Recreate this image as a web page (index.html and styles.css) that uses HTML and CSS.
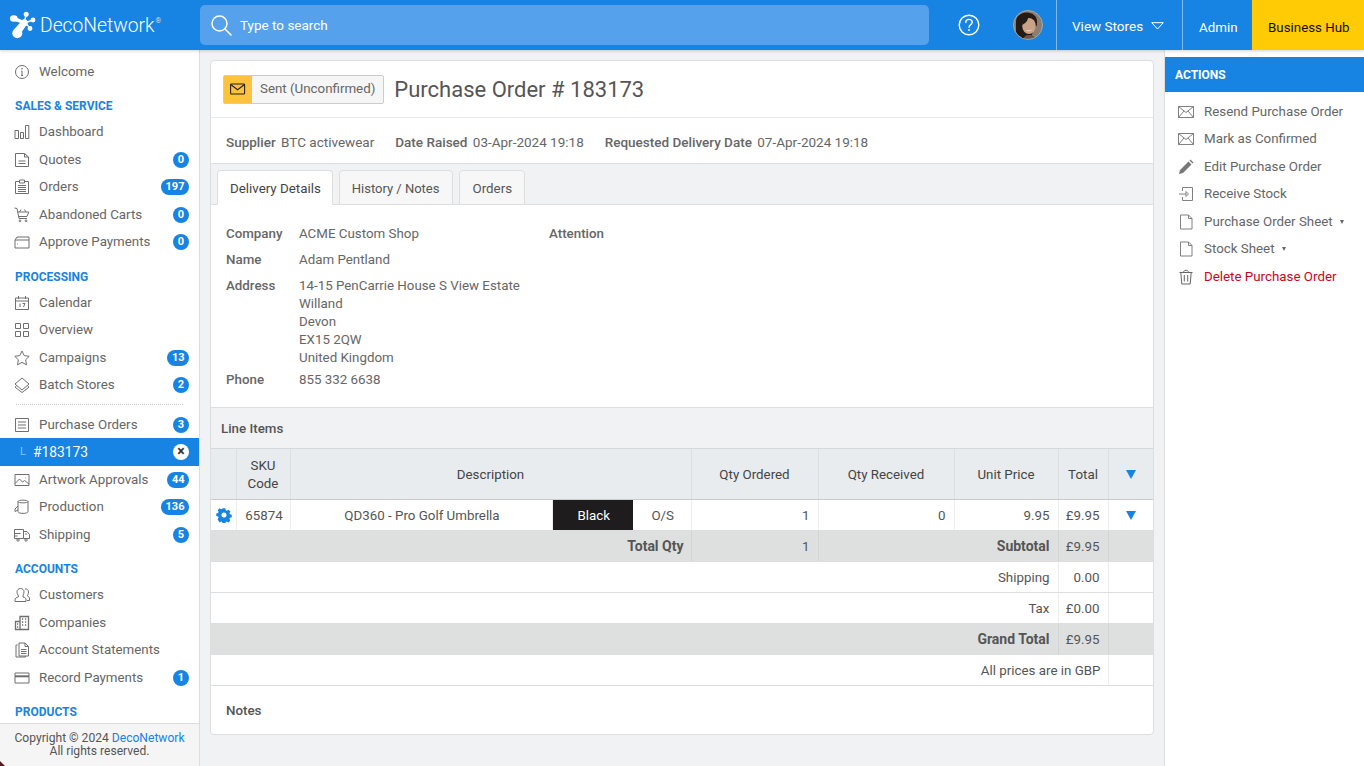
FILE: index.html
```html
<!DOCTYPE html>
<html lang="en">
<head>
<meta charset="utf-8">
<title>Purchase Order # 183173</title>
<link rel="stylesheet" href="styles.css">
</head>
<body>
<header class="topbar">
  <div class="brand">
    <svg class="logo" width="28" height="28" viewBox="0 0 28 28"><g fill="#fff"><ellipse cx="3.800" cy="6.500" rx="3.800" ry="3.300"/><circle cx="16.200" cy="2.200" r="2.500"/><circle cx="23" cy="8" r="2.400"/><circle cx="20" cy="16.500" r="2.400"/><circle cx="7.300" cy="21.200" r="5"/><circle cx="14.300" cy="10.800" r="3.500"/><path d="M4 4.500l9 4-1 3-9-3zM15.500 2.500l1.300.4-1.600 7-1.400-.4zM22.500 7.300l.5 1.400-8 3-.5-1.400zM14.800 11l1-.8 5 5.700-1 1zM3.500 18l8-9 5 4-6.500 9.500z"/></g></svg>
    <span class="brand-name">DecoNetwork<sup class="reg">®</sup></span>
  </div>
  <div class="search">
    <svg width="22" height="22" viewBox="0 0 22 22" fill="none" stroke="#fff" stroke-width="1.500"><circle cx="9.500" cy="9.500" r="7.500"/><path d="M15 15l6 6" stroke-linecap="round"/></svg>
    <span>Type to search</span>
  </div>
  <div class="help">
    <svg width="22" height="22" viewBox="0 0 22 22" fill="none" stroke="#fff" stroke-width="1.400"><circle cx="11" cy="11" r="9.800"/><path d="M7.800 8.600c0-2 1.400-3.200 3.200-3.200s3.200 1.200 3.200 2.900c0 2.300-3.200 2.500-3.200 5" stroke-linecap="round"/><circle cx="11" cy="16" r=".9" fill="#fff" stroke="none"/></svg>
  </div>
  <div class="avatar">
    <svg width="30" height="30" viewBox="0 0 30 30"><defs><clipPath id="av"><circle cx="15" cy="15" r="14.500"/></clipPath></defs><g clip-path="url(#av)"><rect width="30" height="30" fill="#8c7e70"/><path d="M3 30V12C3 5 9 2.500 14 2.500S24 6 24 11v4l-3 4-4 11z" fill="#241a16"/><ellipse cx="16" cy="16" rx="6.800" ry="8" fill="#c9a288"/><path d="M9 15c.5-5 3-7 6-7.500 0 3-2.500 6-6 7.500z" fill="#241a16"/><path d="M12.500 19.500c2 1.200 4.500 1.200 6.500 0-1 2.400-5.500 2.400-6.500 0z" fill="#efe2d8"/><path d="M10 30c1-4 3-5 6-5s6 1 7 5z" fill="#6a564a"/></g><circle cx="15" cy="15" r="14.500" fill="none" stroke="#a8a8a4"/></svg>
  </div>
  <a class="top-link stores">View Stores
    <svg width="13" height="8" viewBox="0 0 13 8" fill="none" stroke="#fff"><path d="M.7.700h11.600L6.500 7z"/></svg>
  </a>
  <a class="top-link admin">Admin</a>
  <a class="hub">Business Hub</a>
</header>

<div class="shell">
  <aside class="sidebar">
    <nav class="nav">
      <a class="row"><svg class="ico" viewBox="0 0 16 16"><circle cx="8" cy="8" r="6.500"/><path d="M8 7v4.500M7 11.500h2M7.200 7H8"/><circle cx="8" cy="4.800" r=".4"/></svg><span>Welcome</span></a>

      <h3 class="heading">SALES &amp; SERVICE</h3>
      <a class="row"><svg class="ico" viewBox="0 0 16 16"><path d="M1 6.500h3.500v8H1zM6.500 8.500h3v6h-3zM11.500 1.500h3.300v13h-3.300z"/></svg><span>Dashboard</span></a>
      <a class="row"><svg class="ico" viewBox="0 0 16 16"><path d="M1.500 1.500h9l4 3.500v9.500h-13zM10.500 1.500V5h4M4.500 9h7M4.500 11.500h7"/></svg><span>Quotes</span><b class="badge">0</b></a>
      <a class="row"><svg class="ico" viewBox="0 0 16 16"><path d="M5 2.500H1.500v12h13v-12H11M5.500 1h5v3h-5zM4 6.500h8M4 8.500h8M4 10.500h8M4 12.500h8"/></svg><span>Orders</span><b class="badge">197</b></a>
      <a class="row"><svg class="ico" viewBox="0 0 16 16"><path d="M.500 1l2.500.500 2 10h8M3.800 5h11l-1.800 4.500H5M5.500 5L7 2.500M12 5L10.500 2.500"/><circle cx="6" cy="13.800" r=".9"/><circle cx="12" cy="13.800" r=".9"/></svg><span>Abandoned Carts</span><b class="badge">0</b></a>
      <a class="row"><svg class="ico" viewBox="0 0 16 16"><path d="M1 6v8h14V3H3L1 6h14M3 10h.8"/></svg><span>Approve Payments</span><b class="badge">0</b></a>

      <h3 class="heading">PROCESSING</h3>
      <a class="row"><svg class="ico" viewBox="0 0 16 16"><path d="M1.500 3h13v11.500h-13zM1.500 6h13M4.500 1v3M11.500 1v3M6 8.500v3.500M8.500 8.500h2.500L9.500 12"/></svg><span>Calendar</span></a>
      <a class="row"><svg class="ico" viewBox="0 0 16 16"><path d="M1.500 1.500h5v5h-5zM9.500 1.500h5v5h-5zM1.500 9.500h5v5h-5zM9.500 9.500h5v5h-5z"/></svg><span>Overview</span></a>
      <a class="row"><svg class="ico" viewBox="0 0 16 16"><path d="M8 1l2.200 4.600 5 .7-3.600 3.500.9 5L8 12.400l-4.500 2.400.9-5L.8 6.300l5-.7z"/></svg><span>Campaigns</span><b class="badge">13</b></a>
      <a class="row"><svg class="ico" viewBox="0 0 16 16"><path d="M8 1l7 6-7 6-7-6zM2.500 9L1 10.200 8 15.500l7-5.300L13.500 9"/></svg><span>Batch Stores</span><b class="badge">2</b></a>
      <div class="rule"></div>
      <a class="row"><svg class="ico" viewBox="0 0 16 16"><path d="M1.500 1.500h13v13h-13zM4 5h8M4 8h8M4 11h8"/></svg><span>Purchase Orders</span><b class="badge">3</b></a>
      <a class="row current"><span class="tree">L</span><span>#183173</span><b class="close">×</b></a>
      <a class="row"><svg class="ico" viewBox="0 0 16 16"><path d="M1 2.500h14v11H1zM1 11.500l4.500-4.500 3 3 2-1.500 4.500 3.500M11 6h.6"/></svg><span>Artwork Approvals</span><b class="badge">44</b></a>
      <a class="row"><svg class="ico" viewBox="0 0 16 16"><path d="M4 2.500c0-1.800 10-1.800 10 0v10c0 2.500-10 2.500-10 0zM4 2.500c0 1.800 10 1.800 10 0M4 7L1 10v2.500L4 11"/></svg><span>Production</span><b class="badge">136</b></a>
      <a class="row"><svg class="ico" viewBox="0 0 16 16"><path d="M.5 2.500h9v9h-9zM9.500 4.500H13l2.500 3v4h-6M.5 6.500h6M.5 9h3M11 7h2"/><circle cx="4" cy="13" r="1.200"/><circle cx="12" cy="13" r="1.200"/></svg><span>Shipping</span><b class="badge">5</b></a>

      <h3 class="heading">ACCOUNTS</h3>
      <a class="row"><svg class="ico" viewBox="0 0 16 16"><path d="M9 10c2 .5 3 1 3 3v1.500H1V13c0-2 1.500-2.500 3.500-3.200.5-1-1.500-2-1.500-5C3 3 4.500 1.500 6.500 1.500S10 3 10 4.800c0 2.500-1.500 4-1 5.200zM11 2c2-.5 3.500 1 3.500 3 0 2-1 3-1 4 1 .5 2 1 2 3v1.500H13"/></svg><span>Customers</span></a>
      <a class="row"><svg class="ico" viewBox="0 0 16 16"><path d="M6 14.500V1.500h8.500v13zM1.500 14.500V6.500H6v8zM8 4h1.200M11 4h1.200M8 7h1.200M11 7h1.200M8 10h1.200M11 10h1.200M3 9h1.200M3 12h1.200" stroke-width="1.300"/></svg><span>Companies</span></a>
      <a class="row"><svg class="ico" viewBox="0 0 16 16"><path d="M5 1h6l3.500 3.500v9.500H5zM11 1v3.500h3.500M3.500 3H2v12h9.500v-1M7 7.500h5.500M7 9.500h5.500M7 11.500h5.500"/></svg><span>Account Statements</span></a>
      <a class="row"><svg class="ico" viewBox="0 0 16 16"><path d="M1 3h14v10H1z"/><path d="M1 6.300h14" stroke-width="2"/></svg><span>Record Payments</span><b class="badge">1</b></a>

      <h3 class="heading">PRODUCTS</h3>
    </nav>
    <footer class="copyright">Copyright © 2024 <a>DecoNetwork</a><br>All rights reserved.</footer>
  </aside>

  <main class="main">
    <section class="panel">
      <div class="title-row">
        <div class="status">
          <span class="status-ico"><svg width="16" height="12" viewBox="0 0 16 12" fill="none" stroke="#222" stroke-width="1.100"><rect x=".6" y="1" width="14" height="10" rx=".8"/><path d="M1 1.800l6.600 5 6.600-5"/></svg></span>
          <span class="status-text">Sent (Unconfirmed)</span>
        </div>
        <h1 class="title">Purchase Order # 183173</h1>
      </div>
      <div class="meta">
        <span class="meta-item"><b>Supplier</b> BTC activewear</span>
        <span class="meta-item"><b>Date Raised</b> 03-Apr-2024 19:18</span>
        <span class="meta-item"><b>Requested Delivery Date</b> 07-Apr-2024 19:18</span>
      </div>
      <div class="tabs">
        <a class="tab active">Delivery Details</a>
        <a class="tab narrow">History / Notes</a>
        <a class="tab">Orders</a>
      </div>
      <div class="details">
        <b>Company</b><span>ACME Custom Shop</span><b>Attention</b>
        <b>Name</b><span>Adam Pentland</span><i></i>
        <b>Address</b><span class="address">14-15 PenCarrie House S View Estate<br>Willand<br>Devon<br>EX15 2QW<br>United Kingdom</span><i></i>
        <b>Phone</b><span>855 332 6638</span><i></i>
      </div>
      <div class="items-head">Line Items</div>
      <table class="items">
        <colgroup>
          <col class="c-gear"><col class="c-sku"><col class="c-desc"><col class="c-color"><col class="c-size"><col class="c-ord"><col class="c-rec"><col class="c-unit"><col class="c-total"><col class="c-arrow">
        </colgroup>
        <thead>
          <tr><th></th><th>SKU<br>Code</th><th colspan="3">Description</th><th>Qty Ordered</th><th>Qty Received</th><th>Unit Price</th><th>Total</th><th class="arrow"><span class="tri"></span></th></tr>
        </thead>
        <tbody>
          <tr>
            <td class="center gear"><svg width="16" height="16" viewBox="0 0 16 16"><path fill="#1783e2" fill-rule="evenodd" d="M6.500.6h3l.4 2 1.300.6 1.800-1.100 2.100 2.100-1.100 1.800.6 1.300 2 .4v3l-2 .4-.6 1.300 1.100 1.800-2.100 2.100-1.800-1.100-1.300.6-.4 2h-3l-.4-2-1.300-.6-1.800 1.100L.9 12.700 2 10.900l-.6-1.300-2-.4v-3l2-.4.6-1.300L.9 2.700 3 .6l1.800 1.100 1.300-.6zM8 5.200a2.800 2.800 0 1 0 0 5.600 2.800 2.800 0 0 0 0-5.600z" transform="translate(.8 .8) scale(.9)"/></svg></td>
            <td class="center">65874</td>
            <td class="center">QD360 - Pro Golf Umbrella</td>
            <td class="center swatch">Black</td>
            <td class="center noline">O/S</td>
            <td class="num">1</td><td class="num">0</td><td class="num">9.95</td><td class="num">£9.95</td>
            <td class="center arrow"><span class="tri"></span></td>
          </tr>
          <tr class="sum">
            <td colspan="5" class="num wide"><b>Total Qty</b></td><td class="num">1</td><td colspan="2" class="num"><b>Subtotal</b></td><td class="num">£9.95</td><td></td>
          </tr>
          <tr><td colspan="8" class="num">Shipping</td><td class="num">0.00</td><td></td></tr>
          <tr><td colspan="8" class="num">Tax</td><td class="num">£0.00</td><td></td></tr>
          <tr class="sum"><td colspan="8" class="num"><b>Grand Total</b></td><td class="num">£9.95</td><td></td></tr>
          <tr><td colspan="9" class="num wide">All prices are in GBP</td><td></td></tr>
        </tbody>
      </table>
      <div class="notes">Notes</div>
    </section>
  </main>

  <aside class="actions">
    <h2 class="actions-head">ACTIONS</h2>
    <a class="action"><svg class="aico" viewBox="0 0 16 16"><path d="M.500 2.500h15v11H.5zM.5 2.500L8 8.500l7.500-6M.5 13.500L6 7M15.500 13.500L10 7"/></svg><span>Resend Purchase Order</span></a>
    <a class="action"><svg class="aico" viewBox="0 0 16 16"><path d="M.500 2.500h15v11H.5zM.5 2.500L8 8.500l7.500-6M.5 13.500L6 7M15.500 13.500L10 7"/></svg><span>Mark as Confirmed</span></a>
    <a class="action"><svg class="aico solid" viewBox="0 0 16 16"><path d="M1 15l1-4 8.500-8.500 3 3L5 14zM11.500 1.500l1-1 3 3-1 1z"/></svg><span>Edit Purchase Order</span></a>
    <a class="action"><svg class="aico" viewBox="0 0 16 16"><path d="M4.500 5V1.500h10v13h-10V11M1 8h7M8 5.500L10.500 8 8 10.500z"/></svg><span>Receive Stock</span></a>
    <a class="action"><svg class="aico" viewBox="0 0 16 16"><path d="M2.500 1h8l3.500 3.500v10.500H2.500zM10.500 1v3.500H14"/></svg><span>Purchase Order Sheet</span><i class="caret"></i></a>
    <a class="action"><svg class="aico" viewBox="0 0 16 16"><path d="M2.500 1h8l3.500 3.500v10.500H2.500zM10.500 1v3.500H14"/></svg><span>Stock Sheet</span><i class="caret"></i></a>
    <a class="action danger"><svg class="aico dark" viewBox="0 0 16 16"><path d="M1.500 3.500h13M2.800 3.500l1 11.500h8.400l1-11.500M5.500 3.500C5.500 .5 10.500 .5 10.500 3.500M6.300 6v6.500M9.700 6v6.500"/></svg><span>Delete Purchase Order</span></a>
  </aside>
</div>
<div class="corner"></div>
</body>
</html>
```
FILE: styles.css
```css
* { box-sizing: border-box; }
html, body { margin: 0; height: 100%; }
body {
  display: flex;
  flex-direction: column;
  height: 100vh;
  overflow: hidden;
  font: 13.330px/18px Roboto, "Liberation Sans", sans-serif;
  color: #666;
  background: #f1f2f4;
}

/* top bar */
.topbar {
  flex: 0 0 50px;
  display: flex;
  align-items: stretch;
  background: #1783e2;
  color: #fff;
  position: relative;
  z-index: 2;
  box-shadow: 0 1px 3px rgba(0, 0, 0, .18);
}
.brand { width: 200px; display: flex; align-items: center; padding-left: 10px; }
.logo { flex: none; margin-top: 1px; overflow: visible; }
.brand-name { margin-left: 2px; padding-top: 2px; font-size: 19.300px; font-weight: 300; line-height: 24px; }
.reg { font-size: 7px; line-height: 0; vertical-align: 9px; margin-left: 1px; }
.search {
  width: 729px;
  margin: 5px 0;
  display: flex;
  align-items: center;
  gap: 8px;
  padding-left: 10px;
  background: #55a1ec;
  border-radius: 5px;
  font-size: 13.500px;
}
.help { width: 80px; display: flex; align-items: center; justify-content: center; }
.avatar { width: 47px; padding-top: 10px; padding-left: 4px; }
.avatar svg { display: block; }
.top-link {
  display: flex;
  align-items: center;
  border-left: 1px solid #7fb8ee;
  font-size: 13.500px;
}
.stores { width: 126px; gap: 8px; padding-left: 15px; padding-top: 2px; }
.admin { width: 70px; padding-left: 16px; padding-top: 5px; font-size: 13.330px; }
.hub {
  width: 112px;
  display: flex;
  align-items: center;
  padding: 5px 0 0 16px;
  background: #ffcb05;
  color: #111;
}

.shell { flex: 1; display: flex; min-height: 0; }

/* sidebar */
.sidebar {
  width: 200px;
  flex: none;
  display: flex;
  flex-direction: column;
  background: #fff;
  border-right: 1px solid #ddd;
}
.nav { flex: 1; min-height: 0; overflow: hidden; padding-top: 8px; }
.row {
  height: 27.500px;
  display: flex;
  align-items: center;
  padding: 0 10px 0 14px;
  color: #666;
}
.ico {
  width: 16px;
  height: 16px;
  flex: none;
  margin-right: 9px;
  fill: none;
  stroke: #6f6f6f;
  stroke-width: 1;
}
.badge {
  margin-left: auto;
  min-width: 16px;
  height: 16px;
  padding: 0 4.500px;
  border-radius: 8px;
  background: #1783e2;
  color: #fff;
  font-size: 11px;
  font-weight: 700;
  line-height: 16px;
  text-align: center;
}
.heading {
  margin: 11px 0 0;
  height: 22px;
  padding: 0 0 2px 15px;
  font-size: 12px;
  line-height: 20px;
  font-weight: 700;
  color: #1783e2;
}
.heading:first-of-type { line-height: 19.500px; }
.rule { margin: 5px 16px 5.750px; border-top: 1px dotted #ccc; }
.current { background: #1783e2; color: #fff; padding-left: 15px; font-size: 13.800px; }
.tree { width: 18px; padding-left: 5px; color: #8fc4f3; font-size: 11px; }
.close {
  margin-left: auto;
  width: 16px;
  height: 16px;
  border-radius: 50%;
  background: #fff;
  color: #333;
  font-size: 14px;
  line-height: 15px;
  text-align: center;
}
.copyright {
  flex: 0 0 43px;
  padding-top: 8px;
  background: #f5f5f5;
  border-top: 1px solid #ddd;
  text-align: center;
  font-size: 12.100px;
  line-height: 13px;
  color: #555;
}
.copyright a { color: #1783e2; }

/* main */
.main { flex: 1; min-width: 0; padding: 10px 10px 0; }
.panel {
  height: 675px;
  background: #fff;
  border: 1px solid #dcdee0;
  border-radius: 4px;
  overflow: hidden;
}
.title-row {
  height: 57px;
  display: flex;
  align-items: center;
  padding: 0 0 0 12px;
  border-bottom: 1px solid #e8e9eb;
}
.status {
  height: 29px;
  display: flex;
  align-items: stretch;
  border: 1px solid #ccc;
  border-radius: 2px;
  background: #f6f6f6;
}
.status-ico { width: 28px; display: flex; align-items: center; justify-content: center; background: #ffc23c; }
.status-text { padding: 0 8px 0 8px; line-height: 26px; color: #666; }
.title { margin: 2px 0 0 10px; font-size: 22px; font-weight: 400; color: #555; line-height: 28px; }
.meta {
  height: 46px;
  display: flex;
  align-items: center;
  gap: 21px;
  padding: 2px 0 0 15px;
  border-bottom: 1px solid #dcdee0;
  font-size: 13.500px;
}
.meta b { font-weight: 500; margin-right: 2px; }
.tabs {
  height: 41px;
  display: flex;
  align-items: flex-end;
  gap: 6px;
  padding: 0 0 0 6px;
  background: #f1f2f4;
  border-bottom: 1px solid #dcdee0;
}
.tab {
  height: 35px;
  margin-bottom: -1px;
  padding: 0 12px;
  line-height: 35px;
  background: #f7f7f7;
  border: 1px solid #dcdee0;
  border-radius: 4px 4px 0 0;
  color: #555;
}
.tab.active { padding-right: 11px; background: #fff; border-bottom-color: #fff; color: #444; }
.tab.narrow { padding-right: 13px; font-size: 13px; }
.details {
  height: 203px;
  display: grid;
  grid-template-columns: 73px 250px 1fr;
  align-content: start;
  row-gap: 8px;
  padding: 20px 0 0 15px;
  border-bottom: 1px solid #dcdee0;
}
.details b { font-weight: 500; }
.address { margin-bottom: -4px; }
.items-head {
  height: 41px;
  padding: 12px 0 0 10px;
  background: #f1f2f4;
  font-weight: 500;
  color: #555;
  border-bottom: 1px solid #d5d7d9;
}
.items { width: 942px; table-layout: fixed; border-collapse: collapse; }
.c-gear { width: 25px; }
.c-sku { width: 54px; }
.c-desc { width: 262px; }
.c-color { width: 81px; }
.c-size { width: 58px; }
.c-ord { width: 127px; }
.c-rec { width: 136px; }
.c-unit { width: 104px; }
.c-total { width: 50px; }
.c-arrow { width: 45px; }
.items th {
  height: 50px;
  padding: 2px 0 0;
  background: #e9ecee;
  border-right: 1px solid #dcdee0;
  border-bottom: 1px solid #c9cbcd;
  font-weight: 400;
  color: #444;
  text-align: center;
}
.items th:last-child, .items td:last-child { border-right: 0; }
.items td {
  height: 31px;
  padding: 2px 8px 0 7px;
  border-right: 1px solid #ececec;
  border-bottom: 1px solid #dcdee0;
  color: #555;
}
.items .center { padding: 2px 6px 0 8px; text-align: center; }
.items .num { text-align: right; }
.items .wide { padding-right: 7px; }
.items .gear { padding: 1px 0 0 1px; line-height: 0; }
.items .swatch { background: #1e1c1c; color: #fff; border-right: 0; }
.items .noline { border-right: 1px solid #ececec; }
.items b { font-size: 14px; font-weight: 700; color: #555; vertical-align: -.5px; }
.items .arrow { padding: 3px 0 0 1px; }
.sum td { background: #dee0e0; border-right-color: #d2d4d4; }
.tri {
  display: inline-block;
  vertical-align: 0;
  border-left: 5px solid transparent;
  border-right: 5px solid transparent;
  border-top: 9px solid #1783e2;
}
.notes { padding: 16px 0 0 15px; font-weight: 500; color: #555; }

/* actions */
.actions { width: 200px; flex: none; padding-top: 7px; background: #fff; border-left: 1px solid #ddd; }
.actions-head {
  margin: 0 0 6px;
  height: 35px;
  padding: 1px 0 0 10px;
  background: #1783e2;
  color: #fff;
  font-size: 12px;
  font-weight: 700;
  line-height: 35px;
}
.action { height: 27.500px; display: flex; align-items: center; padding-left: 13px; color: #666; }
.aico {
  width: 16px;
  height: 16px;
  flex: none;
  margin-right: 10px;
  fill: none;
  stroke: #808080;
  stroke-width: 1;
}
.aico.dark { stroke: #666; }
.aico.solid { fill: #777; stroke: none; }
.danger { color: #d0021b; }
.caret {
  margin-left: 7px;
  border-left: 2.500px solid transparent;
  border-right: 2.500px solid transparent;
  border-top: 4px solid #666;
}
.corner {
  position: absolute;
  left: 0;
  bottom: 0;
  border-left: 5px solid #5c1a1e;
  border-top: 5px solid transparent;
}
```
